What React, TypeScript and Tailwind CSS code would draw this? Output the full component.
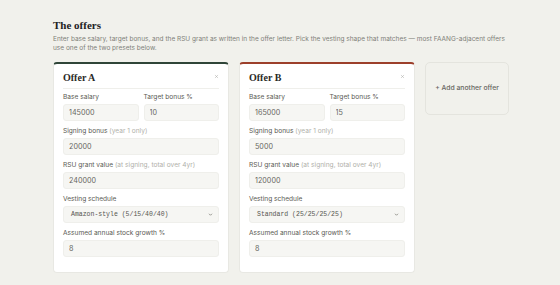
import { X } from "lucide-react";

type Offer = {
  name: string;
  accent: string;
  base: string;
  bonus: string;
  signing: string;
  rsu: string;
  vesting: string;
  growth: string;
};

const offers: Offer[] = [
  {
    name: "Offer A",
    accent: "border-t-[#2f4538]",
    base: "145000",
    bonus: "10",
    signing: "20000",
    rsu: "240000",
    vesting: "Amazon-style (5/15/40/40)",
    growth: "8",
  },
  {
    name: "Offer B",
    accent: "border-t-[#9c3f2b]",
    base: "165000",
    bonus: "15",
    signing: "5000",
    rsu: "120000",
    vesting: "Standard (25/25/25/25)",
    growth: "8",
  },
];

const Field = ({
  label,
  hint,
  value,
}: {
  label: string;
  hint?: string;
  value: string;
}) => (
  <label className="flex flex-col">
    <span className="text-[6.6px] leading-[9px] text-[#5a5a54] mb-[2px]">
      {label}
      {hint && <span className="text-[#b0b0aa]"> {hint}</span>}
    </span>
    <input
      readOnly
      value={value}
      className="h-[17px] w-full rounded-[3px] border border-[#efefeb] bg-[#f6f6f3] px-[5px] text-[7.2px] text-[#66665f] outline-none"
    />
  </label>
);

const OfferCard = ({ offer }: { offer: Offer }) => (
  <div
    className={`w-[176px] rounded-[4px] border border-[#e8e8e3] border-t-2 ${offer.accent} bg-white px-[9px] pb-[15px]`}
  >
    <div className="flex items-start justify-between border-b border-[#efefeb] pt-[7px] pb-[3px]">
      <span className="font-['Liberation_Serif',serif] text-[10px] leading-[14px] font-bold text-[#2a2a26]">
        {offer.name}
      </span>
      <X className="w-[5px] h-[5px] mt-[3px] text-[#9a9a95]" strokeWidth={2} />
    </div>
    <div className="flex flex-col gap-[6px] pt-[4px]">
      <div className="grid grid-cols-2 gap-x-[5px]">
        <Field label="Base salary" value={offer.base} />
        <Field label="Target bonus %" value={offer.bonus} />
      </div>
      <Field label="Signing bonus" hint="(year 1 only)" value={offer.signing} />
      <Field label="RSU grant value" hint="(at signing, total over 4yr)" value={offer.rsu} />
      <label className="flex flex-col">
        <span className="text-[6.6px] leading-[9px] text-[#5a5a54] mb-[2px]">
          Vesting schedule
        </span>
        <div className="flex h-[17px] items-center justify-between rounded-[3px] border border-[#efefeb] bg-[#f6f6f3] pl-[7px] pr-[5px]">
          <span className="font-['Liberation_Mono',monospace] text-[6.5px] text-[#55554f]">
            {offer.vesting}
          </span>
          <svg width="5" height="5" viewBox="0 0 10 10" fill="none">
            <path d="M2 3.5 5 6.5 8 3.5" stroke="#77776f" strokeWidth="1.5" />
          </svg>
        </div>
      </label>
      <Field label="Assumed annual stock growth %" value={offer.growth} />
    </div>
  </div>
);

export default function App() {
  return (
    <div className="min-h-screen w-[560px] h-[285px] bg-[#f1f1ec] pl-[53px] pt-[18px] font-['Inter',sans-serif] overflow-hidden">
      <h2 className="font-['Liberation_Serif',serif] text-[11px] leading-[15px] font-bold text-[#22221f]">
        The offers
      </h2>
      <p className="mt-[2px] w-[470px] text-[6.5px] leading-[9px] text-[#7f7f79]">
        Enter base salary, target bonus, and the RSU grant as written in the offer letter. Pick the
        vesting shape that matches — most FAANG-adjacent offers
        <br />
        use one of the two presets below.
      </p>
      <div className="mt-[9px] flex items-start gap-[10px]">
        {offers.map((o) => (
          <OfferCard key={o.name} offer={o} />
        ))}
        <button className="flex h-[53px] w-[84px] items-center justify-center rounded-[5px] border border-[#e4e4de] text-[6.8px] font-medium text-[#66665f]">
          + Add another offer
        </button>
      </div>
    </div>
  );
}
